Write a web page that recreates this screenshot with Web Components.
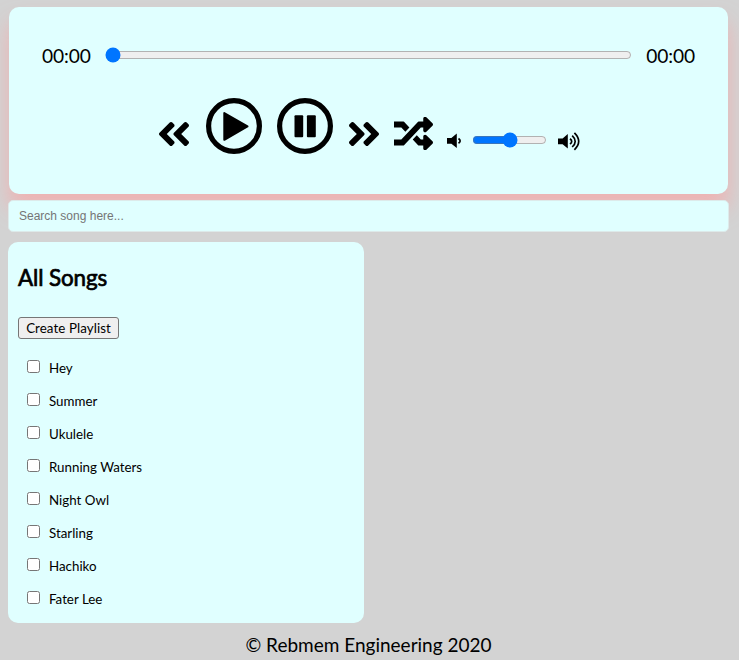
<!DOCTYPE html>
<html lang="en">
<head>
<meta charset="utf-8">
<title>Music Player</title>
<style>
html{background:#d3d3d3}
body{margin:0;height:660px;overflow:hidden;font-family:Lato,sans-serif;color:#000}
</style>
</head>
<body>
<music-app></music-app>
<script>
const define = (name, html, setup) => {
  const t = document.createElement('template');
  t.innerHTML = html;
  customElements.define(name, class extends HTMLElement {
    constructor() {
      super();
      this.attachShadow({mode: 'open'}).append(t.content.cloneNode(true));
    }
    connectedCallback() { if (setup) setup(this, this.shadowRoot); }
  });
};

const doubleLeft = '<path d="M223.7 239l136-136c9.4-9.4 24.6-9.4 33.9 0l22.6 22.6c9.4 9.4 9.4 24.6 0 33.9L319.9 256l96.4 96.4c9.4 9.4 9.4 24.6 0 33.9L393.7 409c-9.4 9.4-24.6 9.4-33.9 0l-136-136c-9.5-9.4-9.5-24.6-.1-34zm-192 34l136 136c9.4 9.4 24.6 9.4 33.9 0l22.6-22.6c9.4-9.4 9.4-24.6 0-33.9L127.9 256l96.4-96.4c9.4-9.4 9.4-24.6 0-33.9L201.7 103c-9.4-9.4-24.6-9.4-33.9 0l-136 136c-9.5 9.4-9.5 24.6-.1 34z"/>';
const icons = {
  previous: [30, 24, '24.6 96 398.8 320', doubleLeft],
  next: [30, 24, '24.6 96 398.8 320', '<g transform="translate(448 0) scale(-1 1)">' + doubleLeft + '</g>'],
  play: [56, 56, '0 0 56 56', '<circle cx="28" cy="28" r="25.4" fill="none" stroke="#000" stroke-width="5.2"/><path d="M18.3 15L41.5 28.4L18.3 41.8z" stroke="#000" stroke-width="2" stroke-linejoin="round"/>'],
  pause: [56, 56, '0 0 56 56', '<circle cx="28" cy="28" r="25.4" fill="none" stroke="#000" stroke-width="5.2"/><rect x="17.5" y="17.2" width="8.7" height="22" rx="1"/><rect x="29.9" y="17.2" width="8.9" height="22" rx="1"/>'],
  shuffle: [39, 33, '0 34.5 512 443', '<path d="M504.971 359.029c9.373 9.373 9.373 24.569 0 33.941l-80 79.984c-15.01 15.01-40.971 4.49-40.971-16.971V416h-58.785a12.004 12.004 0 0 1-8.773-3.812l-70.556-75.596 53.333-57.143L352 336h32v-39.981c0-21.438 25.943-31.998 40.971-16.971l80 79.981zM0 176h96l52.781 56.551 53.333-57.143-70.556-75.596A11.999 11.999 0 0 0 122.785 96H0zm384 0v39.984c0 21.46 25.961 31.98 40.971 16.971l80-79.984c9.373-9.373 9.373-24.569 0-33.941l-80-79.981C409.943 24.021 384 34.582 384 56.019V96h-58.785a12.004 12.004 0 0 0-8.773 3.812L96 336H0v80h122.785c3.326 0 6.503-1.381 8.773-3.812L352 176h32z"/>'],
  quiet: [16, 20, '0 0 16 20', '<path d="M0 7h4.4L9.8 2.5v14.6L4.4 12.7H0z"/><path d="M11.5 7.5Q14.8 9.9 11.5 12.3" fill="none" stroke="#000" stroke-width="1.7"/>'],
  loud: [22, 20, '0 0 22 20', '<path d="M0 6.5h4.6L9.8 2v14.6L4.6 12.2H0z"/><path d="M12 6.8Q15.4 9.4 12 12M14.2 3.7Q20.2 9.4 14.2 15M16.4 .8Q25 9.4 16.4 17.8" fill="none" stroke="#000" stroke-width="1.7"/>']
};

define('player-icon', '', (el, root) => {
  const [w, h, box, shape] = icons[el.getAttribute('name')];
  root.innerHTML = `<style>:host{display:block;flex:none}svg{display:block}</style><svg width="${w}" height="${h}" viewBox="${box}" preserveAspectRatio="none">${shape}</svg>`;
});

define('seek-bar', `<style>
:host{display:flex;align-items:center;height:24px;font-size:19.2px;line-height:24px;letter-spacing:-.1px}
input{flex:1;min-width:0;margin:0 14.5px 2px 14px;height:16px}
</style><slot name="elapsed"></slot><input type="range" value="0" aria-label="Position"><slot name="total"></slot>`);

define('player-controls', `<style>
:host{display:flex;align-items:flex-start}
.low{margin-top:24px}.round{margin-left:17px}.pause{margin-left:15.3px}
.next{margin:24px 0 0 15.7px}.shuffle{margin:19px 0 0 15.4px}
.quiet{margin:32.5px 0 0 13.6px}
input{width:75px;height:16px;margin:34px 0 0 9.5px}
.loud{margin:33.6px 0 0 10.5px}
</style>
<player-icon class="low" name="previous"></player-icon>
<player-icon class="round" name="play"></player-icon>
<player-icon class="pause" name="pause"></player-icon>
<player-icon class="next" name="next"></player-icon>
<player-icon class="shuffle" name="shuffle"></player-icon>
<player-icon class="quiet" name="quiet"></player-icon>
<input type="range" value="50" aria-label="Volume">
<player-icon class="loud" name="loud"></player-icon>`);

define('player-card', `<style>
:host{display:block;box-sizing:border-box;height:187px;margin:0 1px;padding:37px 33px 0;background:#e0ffff;border-radius:10px;box-shadow:0 15px 20px 0 rgba(255,158,158,.6)}
player-controls{margin:30px 0 0 117px}
</style>
<seek-bar><span slot="elapsed">00:00</span><span slot="total">00:00</span></seek-bar>
<player-controls></player-controls>`);

define('song-search', `<style>
:host{display:block;position:relative;margin-top:6px}
input{display:block;box-sizing:border-box;width:100%;height:32px;padding:0 10px;border:1px solid #ddeaea;border-radius:5px;background:#e0ffff;font:12px "Liberation Sans",Arial,sans-serif;outline:0}
</style><input type="text" placeholder="Search song here...">`);

define('song-row', `<style>
:host{display:flex;align-items:flex-start;height:33px;font-size:13.333px;line-height:16px}
input{margin:0 9px 0 0;width:13px;height:13px}
</style><input type="checkbox"><slot></slot>`);

define('song-list', `<style>
:host{display:block;position:relative;box-sizing:border-box;width:356px;height:381px;margin-top:10px;padding:21px 10px 0;background:#e0ffff;border-radius:10px}
h2{margin:0;font-size:22.4px;line-height:29px;font-weight:400;letter-spacing:-.1px;-webkit-text-stroke:.7px #000}
button{display:block;box-sizing:border-box;width:101px;height:22px;margin:25px 0 21px;padding:0;border:1px solid #767676;border-radius:3px;background:#efefef;font:13.333px/20px Lato,sans-serif;letter-spacing:.08px;color:#000}
.songs{padding-left:9px}
</style><h2>All Songs</h2><button>Create Playlist</button><div class="songs"><slot></slot></div>`);

define('page-footer', `<style>
:host{display:block;margin-top:10px;text-align:center;font-size:19px;line-height:24px}
</style><slot></slot>`);

define('music-app', `<style>:host{display:block;padding:7px 10px 0 8px}</style>
<player-card></player-card>
<song-search></song-search>
<song-list>
<song-row>Hey</song-row><song-row>Summer</song-row><song-row>Ukulele</song-row><song-row>Running Waters</song-row><song-row>Night Owl</song-row><song-row>Starling</song-row><song-row>Hachiko</song-row><song-row>Fater Lee</song-row>
</song-list>
<page-footer>© Rebmem Engineering 2020</page-footer>`);
</script>
</body>
</html>
